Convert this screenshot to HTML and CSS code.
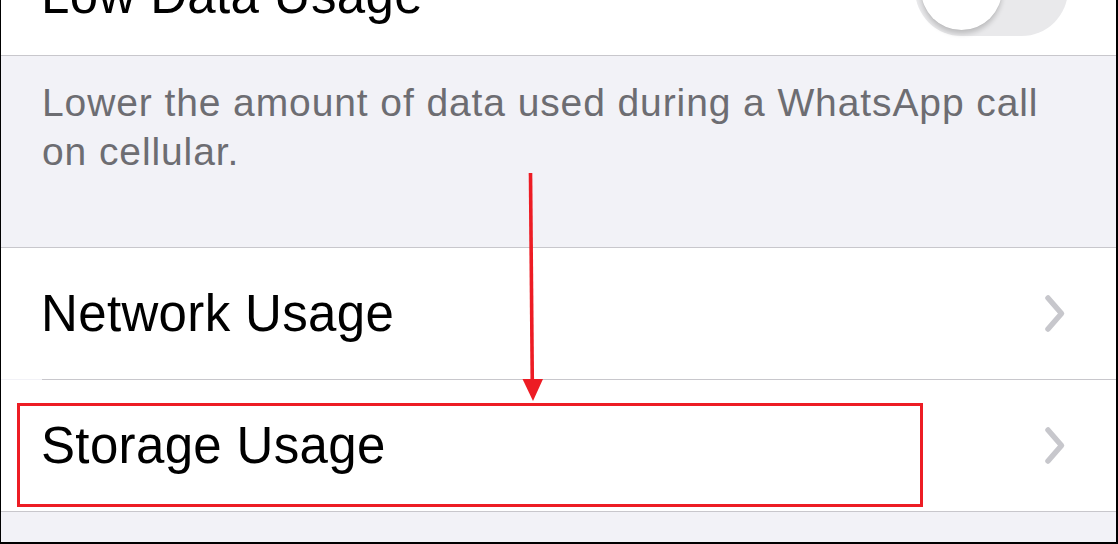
FILE: index.html
```html
<!DOCTYPE html>
<html lang="en">
<head>
<meta charset="utf-8">
<title>Data and Storage Usage</title>
<link rel="stylesheet" href="styles.css">
</head>
<body>
<div class="screen">
  <div class="cell cell-top">
    <span class="label label-top">Low Data Usage</span>
    <span class="switch"><span class="knob"></span></span>
  </div>
  <div class="footer">
    <p class="footer-text">Lower the amount of data used during a WhatsApp call on cellular.</p>
  </div>
  <div class="group">
    <div class="cell cell-inset">
      <span class="label">Network Usage</span>
      <svg class="chevron" width="24" height="40" viewBox="0 0 24 40" aria-hidden="true"><path d="M5 4 L18.5 19.5 L5 35" fill="none" stroke="#c7c7cc" stroke-width="5.5" stroke-linecap="round" stroke-linejoin="round"/></svg>
    </div>
    <div class="cell">
      <span class="label">Storage Usage</span>
      <svg class="chevron" width="24" height="40" viewBox="0 0 24 40" aria-hidden="true"><path d="M5 4 L18.5 19.5 L5 35" fill="none" stroke="#c7c7cc" stroke-width="5.5" stroke-linecap="round" stroke-linejoin="round"/></svg>
    </div>
  </div>
  <div class="highlight"></div>
  <svg class="arrow" width="1118" height="544" viewBox="0 0 1118 544" aria-hidden="true">
    <line x1="530.5" y1="173" x2="532.3" y2="384" stroke="#ed1c24" stroke-width="3.6"/>
    <polygon points="522.5,379 543,379 533,401" fill="#ed1c24"/>
  </svg>
</div>
</body>
</html>
```
FILE: styles.css
```css
* { box-sizing: border-box; }
html, body { margin: 0; padding: 0; background: #ffffff; }
body { font-family: "Liberation Sans", Arial, sans-serif; }

.screen {
  position: relative;
  width: 1118px;
  height: 544px;
  overflow: hidden;
  background: #f2f2f7;
  border-left: 1px solid #000;
  border-right: 2px solid #000;
  border-bottom: 2px solid #000;
}

.cell {
  display: flex;
  align-items: center;
  justify-content: space-between;
  height: 131px;
  padding: 0 49px 0 40px;
  background: #ffffff;
  position: relative;
}

.cell-top {
  height: 132px;
  margin-top: -76px;
  padding-right: 48px;
  border-bottom: 1px solid #c8c7cc;
}

.label {
  font-size: 51px;
  line-height: 51px;
  color: #000000;
  letter-spacing: 0.35px;
}

.label-top { margin-top: 12px; }

.switch {
  display: flex;
  align-items: center;
  width: 153px;
  height: 93px;
  border-radius: 47px;
  background: #e9e9eb;
  padding: 0 6px;
}

.knob {
  width: 81px;
  height: 81px;
  border-radius: 50%;
  background: #ffffff;
  box-shadow: 0 4px 5px rgba(0, 0, 0, 0.18), 0 0 1px rgba(0, 0, 0, 0.14);
}

.footer {
  height: 191px;
  padding: 22px 40px 0 41px;
}

.footer-text {
  margin: 0;
  font-size: 39px;
  line-height: 49px;
  color: #6d6d72;
  letter-spacing: 0.9px;
}

.group {
  border-top: 1px solid #c8c7cc;
  border-bottom: 1px solid #c8c7cc;
}

.cell-inset::after {
  content: "";
  position: absolute;
  left: 41px;
  right: 0;
  bottom: -1px;
  height: 1px;
  background: #c8c7cc;
}

.cell-inset { margin-bottom: 1px; }

.chevron { display: block; flex: none; }

.highlight {
  position: absolute;
  left: 16px;
  top: 403px;
  width: 906px;
  height: 104px;
  border: 3px solid #ed1c24;
}

.arrow {
  position: absolute;
  left: -1px;
  top: 0;
}
```
